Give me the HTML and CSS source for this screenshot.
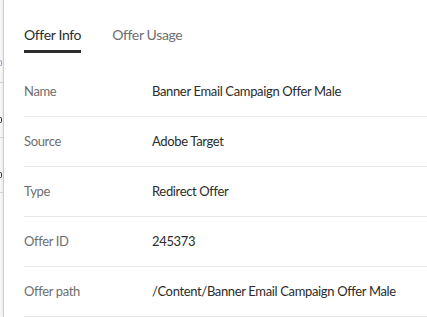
FILE: index.html
```html
<!DOCTYPE html>
<html lang="en">

<head>
    <meta charset="UTF-8">
    <meta name="viewport" content="width=device-width, initial-scale=1.0">
    <title>Offer details</title>
    <link rel="stylesheet" href="styles.css">
</head>

<body>

    <div class="page">
        <!-- Lista por trás do painel (só a borda aparece) -->
        <div class="backdrop">
            <div class="peek peek-link"></div>
            <div class="peek-line first"></div>
            <div class="peek"></div>
            <div class="peek-line"></div>
            <div class="peek"></div>
            <div class="peek-line"></div>
        </div>

        <!-- Painel de detalhes -->
        <div class="panel">
            <div class="tabs">
                <div class="tab active">Offer Info</div>
                <div class="tab">Offer Usage</div>
            </div>

            <div class="details">
                <div class="row">
                    <span class="label">Name</span>
                    <span class="value">Banner Email Campaign Offer Male</span>
                </div>
                <div class="row">
                    <span class="label">Source</span>
                    <span class="value">Adobe Target</span>
                </div>
                <div class="row">
                    <span class="label">Type</span>
                    <span class="value">Redirect Offer</span>
                </div>
                <div class="row">
                    <span class="label">Offer ID</span>
                    <span class="value">245373</span>
                </div>
                <div class="row">
                    <span class="label">Offer path</span>
                    <span class="value">/Content/Banner Email Campaign Offer Male</span>
                </div>
            </div>
        </div>
    </div>

</body>

</html>
```

FILE: styles.css
```css
/* Estilos gerais */
body {
    font-family: Lato, 'Open Sans', 'Liberation Sans', sans-serif;
    background-color: #fff;
    margin: 0;
    overflow: hidden;
}

.page {
    display: flex;
    height: 317px;
}

/* Conteúdo parcialmente visível à esquerda */
.backdrop {
    width: 3px;
    overflow: hidden;
    background-color: #fafafa;
    display: flex;
    flex-direction: column;
}

.peek {
    width: 2px;
    height: 6px;
    margin-top: 6px;
    border-radius: 0 3px 3px 0;
    border: 1px solid #3a3a3a;
    border-left: none;
    box-sizing: border-box;
}

.peek-link {
    margin-top: 60px;
    border-color: #8aa6d0;
}

.peek-line {
    height: 1px;
    background-color: #d8d8d8;
    margin: 14px 0 28px;
}

.peek-line.first {
    margin-top: 16px;
}

/* Painel */
.panel {
    flex: 1;
    background-color: #fff;
    border-left: 1px solid #cfcfcf;
    box-shadow: -1px 0 3px rgba(0, 0, 0, 0.08);
    padding: 0 0 0 20px;
}

.tabs {
    display: flex;
    gap: 31px;
    padding-top: 25px;
}

.tab {
    font-size: 14px;
    letter-spacing: -0.35px;
    line-height: 20px;
    color: #6e6e6e;
    padding-bottom: 5px;
    border-bottom: 3px solid transparent;
}

.tab.active {
    color: #2c2c2c;
    border-bottom-color: #2c2c2c;
}

.details {
    margin-top: 14px;
}

.row {
    display: flex;
    align-items: center;
    height: 50px;
    padding-bottom: 1px;
    box-sizing: border-box;
    border-bottom: 1px solid #e8e8e8;
    font-size: 13px;
    letter-spacing: -0.35px;
}

.label {
    width: 128px;
    color: #6e6e6e;
}

.value {
    color: #2c2c2c;
}
```
